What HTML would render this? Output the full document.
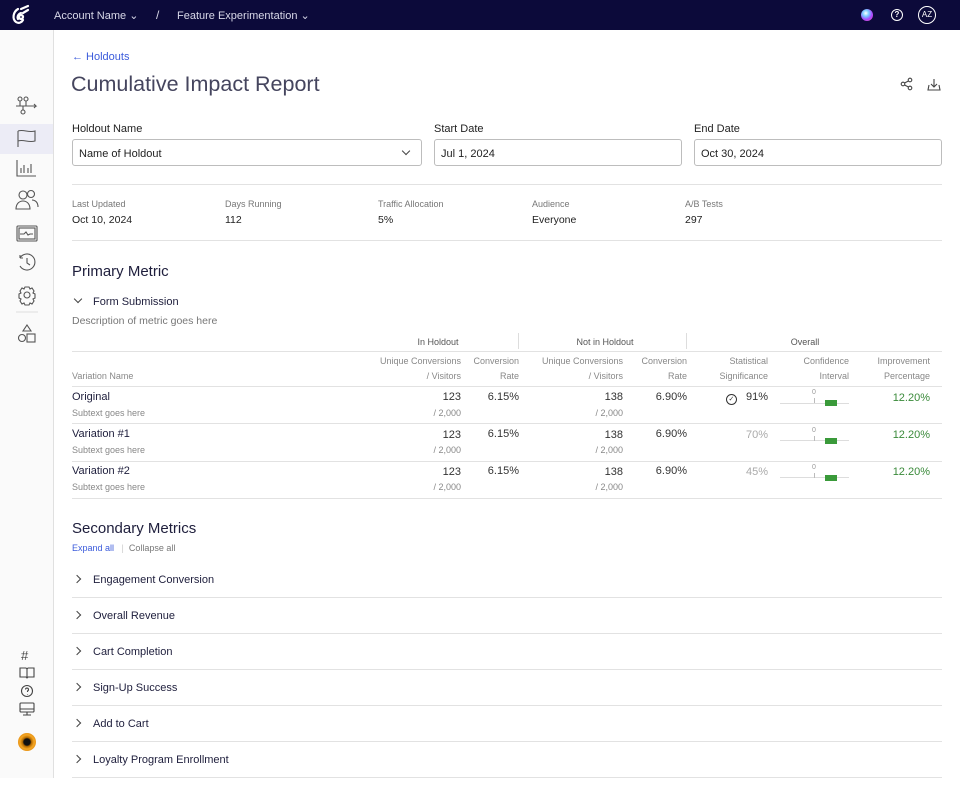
<!DOCTYPE html>
<html><head><style>
*{box-sizing:border-box;margin:0;padding:0}
body{width:960px;height:796px;position:relative;font-family:"Liberation Sans",sans-serif;color:#1e1e3c;background:#fff;overflow:hidden}
.a{position:absolute;white-space:nowrap}
.hdr{left:0;top:0;width:960px;height:30px;background:#0c0a3a}
.side{left:0;top:30px;width:54px;height:748px;background:#fafafa;border-right:1px solid #e0e0e0}
.lbl{font-size:11px;color:#222}
.inp{height:27px;border:1px solid #bdbdbd;border-radius:3px;font-size:11px;padding:8px 6px;color:#222}
.sm{font-size:9px;color:#777}
.v{font-size:10.5px;color:#222}
.hr{height:1px;background:#e2e2e2}
.th{font-size:9px;color:#888;text-align:right;line-height:15px}
.num{font-size:11px;color:#333;text-align:right}
.sub{font-size:9px;color:#888;text-align:right}
.g{color:#3a8a3a;font-size:11px;text-align:right}
.acc{font-size:11px;color:#1e1e3c}
.chev{display:inline-block;width:6px;height:6px;border-right:1.1px solid #444;border-top:1.1px solid #444;transform:rotate(45deg);margin-right:13px;vertical-align:1px}
</style></head><body>
<div class="a hdr"></div>
<svg class="a" style="left:8px;top:3px" width="24" height="24" viewBox="0 0 24 24" fill="none" stroke="#fff" stroke-width="2.2" stroke-linecap="round"><path d="M10 6c-5 3-6 10-2 13 3 2 6 0 7-2"/><path d="M13 10c-3 1-4 4-3 6"/><path d="M13 6l7-3M15 10l5-3"/><circle cx="13" cy="14" r="2"/></svg>
<div class="a" style="left:54px;top:9px;font-size:11px;color:#d8d8e8">Account Name ⌄</div>
<div class="a" style="left:156px;top:8px;font-size:12px;color:#d8d8e8">/</div>
<div class="a" style="left:177px;top:9px;font-size:11px;color:#d8d8e8">Feature Experimentation ⌄</div>
<div class="a" style="left:861px;top:9px;width:12px;height:12px;border-radius:50%;background:radial-gradient(circle at 40% 35%,#fff,#7cf 30%,#a4f 60%,#f6a)"></div>
<div class="a" style="left:891px;top:9px;width:12px;height:12px;border-radius:50%;border:1.3px solid #fff;color:#fff;font-size:8px;text-align:center;line-height:10px;font-weight:bold">?</div>
<div class="a" style="left:918px;top:6px;width:18px;height:18px;border-radius:50%;border:1.3px solid #fff;color:#fff;font-size:8px;text-align:center;line-height:16px">AZ</div>

<div class="a side"></div>
<div class="a" style="left:0;top:124px;width:53px;height:30px;background:#ececf6"></div>
<svg class="a" style="left:14px;top:94px" width="26" height="250" viewBox="0 0 26 250" fill="none" stroke="#555" stroke-width="1.1">
<circle cx="6" cy="5" r="2"/><circle cx="12" cy="5" r="2"/><circle cx="9" cy="18" r="2"/><path d="M2 12h20l-2-2M22 12l-2 2M6 7v5M12 7v5M9 12v4"/>
<path d="M4 37v16M4 37c6-2 10 2 17 0v10c-7 2-11-2-17 0"/>
<path d="M3 66v16h19M7 79v-5M10 79v-8M14 79v-5M17 79v-9"/>
<circle cx="9" cy="101" r="4"/><circle cx="17" cy="100" r="3.5"/><path d="M2 115c0-6 4-8 7-8s7 2 7 8zM18 106c3 0 6 2 6 7"/>
<rect x="3" y="132" width="20" height="15" rx="1"/><rect x="5" y="134" width="16" height="11"/><path d="M6 140h4l2-2 2 3 2-1h3"/>
<path d="M6 164a8 8 0 1 1 0 8M6 164v-3M6 164h3M13 164v5l3 2"/>
<circle cx="13" cy="201" r="3"/><path d="M11 193h4l1 2 2-1 2 3-1 2 2 1v4l-2 1 1 2-2 3-2-1-1 2h-4l-1-2-2 1-2-3 1-2-2-1v-4l2-1-1-2 2-3 2 1z"/>
<path d="M2 218h22" stroke="#ddd"/>
<path d="M13 231l4 6h-8z"/><circle cx="8" cy="244" r="3.5"/><rect x="13" y="240" width="8" height="8"/>
</svg>
<div class="a" style="left:21px;top:648px;font-size:13px;color:#444">#</div>
<svg class="a" style="left:18px;top:666px" width="18" height="58" viewBox="0 0 18 58" fill="none" stroke="#444" stroke-width="1.1"><path d="M2 2h6l1 1 1-1h6v9h-6l-1 1-1-1H2zM9 3v8"/><circle cx="9" cy="25" r="5.5"/><path d="M7.5 23.5a1.5 1.5 0 1 1 2 1.5v1M9.5 28v.5"/><rect x="2" y="37" width="14" height="9" rx="1"/><path d="M2 43h14M9 46v3M5 49h8"/></svg>
<div class="a" style="left:18px;top:733px;width:18px;height:18px;border-radius:50%;background:radial-gradient(circle,#111 25%,#b56a00 35%,#f5a623 55%,#e08a10 80%,#d07000)"></div>

<div class="a" style="left:72px;top:51px;font-size:11px;color:#3b5bdb">← Holdouts</div>
<div class="a" style="left:71px;top:72px;font-size:21.5px;color:#45455e">Cumulative Impact Report</div>
<svg class="a" style="left:900px;top:77px" width="44" height="16" viewBox="0 0 44 16" fill="none" stroke="#444" stroke-width="1.1"><circle cx="3" cy="7" r="1.8"/><circle cx="10" cy="3" r="1.8"/><circle cx="10" cy="11" r="1.8"/><path d="M4.5 6l4-2M4.5 8l4 2"/><path d="M34 2v8M31 7l3 3 3-3M29 8l-1 5h12l-1-5"/></svg>

<div class="a lbl" style="left:72px;top:123px">Holdout Name</div>
<div class="a inp" style="left:72px;top:139px;width:350px">Name of Holdout<span style="position:absolute;right:12px;top:8px;width:6px;height:6px;border-right:1.1px solid #444;border-bottom:1.1px solid #444;transform:rotate(45deg)"></span></div>
<div class="a lbl" style="left:434px;top:123px">Start Date</div>
<div class="a inp" style="left:434px;top:139px;width:248px">Jul 1, 2024</div>
<div class="a lbl" style="left:694px;top:123px">End Date</div>
<div class="a inp" style="left:694px;top:139px;width:248px">Oct 30, 2024</div>
<div class="a hr" style="left:72px;top:184px;width:870px"></div>
<div class="a sm" style="left:72px;top:199px">Last Updated</div><div class="a v" style="left:72px;top:214px">Oct 10, 2024</div>
<div class="a sm" style="left:225px;top:199px">Days Running</div><div class="a v" style="left:225px;top:214px">112</div>
<div class="a sm" style="left:378px;top:199px">Traffic Allocation</div><div class="a v" style="left:378px;top:214px">5%</div>
<div class="a sm" style="left:532px;top:199px">Audience</div><div class="a v" style="left:532px;top:214px">Everyone</div>
<div class="a sm" style="left:685px;top:199px">A/B Tests</div><div class="a v" style="left:685px;top:214px">297</div>
<div class="a hr" style="left:72px;top:240px;width:870px"></div>

<div class="a" style="left:72px;top:263px;font-size:15px;color:#1e1e3c">Primary Metric</div>
<div class="a acc" style="left:75px;top:296px"><span style="display:inline-block;width:6px;height:6px;border-right:1.1px solid #444;border-bottom:1.1px solid #444;transform:rotate(45deg);margin-right:12px;vertical-align:3px"></span>Form Submission</div>
<div class="a" style="left:72px;top:315px;font-size:10.5px;color:#777">Description of metric goes here</div>

<div class="a" style="left:380px;top:337px;width:116px;text-align:center;font-size:9px;color:#555">In Holdout</div>
<div class="a" style="left:518px;top:333px;width:1px;height:16px;background:#ddd"></div>
<div class="a" style="left:540px;top:337px;width:130px;text-align:center;font-size:9px;color:#555">Not in Holdout</div>
<div class="a" style="left:686px;top:333px;width:1px;height:16px;background:#ddd"></div>
<div class="a" style="left:740px;top:337px;width:130px;text-align:center;font-size:9px;color:#555">Overall</div>
<div class="a hr" style="left:72px;top:351px;width:870px"></div>
<div class="a th" style="left:72px;top:369px;text-align:left">Variation Name</div>
<div class="a th" style="right:499px;top:354px">Unique Conversions<br>/ Visitors</div>
<div class="a th" style="right:441px;top:354px">Conversion<br>Rate</div>
<div class="a th" style="right:337px;top:354px">Unique Conversions<br>/ Visitors</div>
<div class="a th" style="right:273px;top:354px">Conversion<br>Rate</div>
<div class="a th" style="right:192px;top:354px">Statistical<br>Significance</div>
<div class="a th" style="right:111px;top:354px">Confidence<br>Interval</div>
<div class="a th" style="right:30px;top:354px">Improvement<br>Percentage</div>
<div class="a hr" style="left:72px;top:386px;width:870px"></div>

<div class="a" style="left:0;top:387px;width:960px;height:37px">
<div class="a acc" style="left:72px;top:4px">Original</div><div class="a sub" style="left:72px;top:21px;text-align:left">Subtext goes here</div>
<div class="a num" style="right:499px;top:4px">123</div><div class="a sub" style="right:499px;top:21px">/ 2,000</div>
<div class="a num" style="right:441px;top:4px">6.15%</div>
<div class="a num" style="right:337px;top:4px">138</div><div class="a sub" style="right:337px;top:21px">/ 2,000</div>
<div class="a num" style="right:273px;top:4px">6.90%</div>
<div class="a num" style="right:192px;top:4px"><span style="display:inline-block;width:11px;height:11px;border:1.1px solid #333;border-radius:50%;font-size:7px;line-height:9px;text-align:center;margin-right:9px;vertical-align:-1px">✓</span>91%</div>
<div class="a" style="left:780px;top:16px;width:69px;height:1px;background:#ddd"></div><div class="a" style="left:812px;top:2px;font-size:7px;color:#999">0</div><div class="a" style="left:814px;top:11px;width:1px;height:5px;background:#bbb"></div><div class="a" style="left:825px;top:13px;width:12px;height:6px;background:#3a9a3a"></div>
<div class="a g" style="right:30px;top:5px">12.20%</div></div>
<div class="a hr" style="left:72px;top:423px;width:870px"></div>

<div class="a" style="left:0;top:424px;width:960px;height:37px">
<div class="a acc" style="left:72px;top:4px">Variation #1</div><div class="a sub" style="left:72px;top:21px;text-align:left">Subtext goes here</div>
<div class="a num" style="right:499px;top:5px">123</div><div class="a sub" style="right:499px;top:21px">/ 2,000</div>
<div class="a num" style="right:441px;top:4px">6.15%</div>
<div class="a num" style="right:337px;top:5px">138</div><div class="a sub" style="right:337px;top:21px">/ 2,000</div>
<div class="a num" style="right:273px;top:4px">6.90%</div>
<div class="a num" style="right:192px;top:5px;color:#aaa">70%</div>
<div class="a" style="left:780px;top:16px;width:69px;height:1px;background:#ddd"></div><div class="a" style="left:812px;top:3px;font-size:7px;color:#999">0</div><div class="a" style="left:814px;top:12px;width:1px;height:5px;background:#bbb"></div><div class="a" style="left:825px;top:14px;width:12px;height:6px;background:#3a9a3a"></div>
<div class="a g" style="right:30px;top:5px">12.20%</div></div>
<div class="a hr" style="left:72px;top:461px;width:870px"></div>

<div class="a" style="left:0;top:462px;width:960px;height:37px">
<div class="a acc" style="left:72px;top:3px">Variation #2</div><div class="a sub" style="left:72px;top:20px;text-align:left">Subtext goes here</div>
<div class="a num" style="right:499px;top:4px">123</div><div class="a sub" style="right:499px;top:20px">/ 2,000</div>
<div class="a num" style="right:441px;top:3px">6.15%</div>
<div class="a num" style="right:337px;top:4px">138</div><div class="a sub" style="right:337px;top:20px">/ 2,000</div>
<div class="a num" style="right:273px;top:3px">6.90%</div>
<div class="a num" style="right:192px;top:4px;color:#aaa">45%</div>
<div class="a" style="left:780px;top:15px;width:69px;height:1px;background:#ddd"></div><div class="a" style="left:812px;top:2px;font-size:7px;color:#999">0</div><div class="a" style="left:814px;top:11px;width:1px;height:5px;background:#bbb"></div><div class="a" style="left:825px;top:13px;width:12px;height:6px;background:#3a9a3a"></div>
<div class="a g" style="right:30px;top:4px">12.20%</div></div>
<div class="a hr" style="left:72px;top:498px;width:870px"></div>

<div class="a" style="left:72px;top:520px;font-size:15px;color:#1e1e3c">Secondary Metrics</div>
<div class="a" style="left:72px;top:543px;font-size:9px;color:#3b5bdb">Expand all <span style="color:#ccc;margin:0 5px">|</span><span style="color:#777">Collapse all</span></div>

<div class="a acc" style="left:74px;top:574px"><span class="chev"></span>Engagement Conversion</div>
<div class="a hr" style="left:72px;top:597px;width:870px"></div>
<div class="a acc" style="left:74px;top:610px"><span class="chev"></span>Overall Revenue</div>
<div class="a hr" style="left:72px;top:633px;width:870px"></div>
<div class="a acc" style="left:74px;top:646px"><span class="chev"></span>Cart Completion</div>
<div class="a hr" style="left:72px;top:669px;width:870px"></div>
<div class="a acc" style="left:74px;top:682px"><span class="chev"></span>Sign-Up Success</div>
<div class="a hr" style="left:72px;top:705px;width:870px"></div>
<div class="a acc" style="left:74px;top:718px"><span class="chev"></span>Add to Cart</div>
<div class="a hr" style="left:72px;top:741px;width:870px"></div>
<div class="a acc" style="left:74px;top:754px"><span class="chev"></span>Loyalty Program Enrollment</div>
<div class="a hr" style="left:72px;top:777px;width:870px"></div>
</body></html>
